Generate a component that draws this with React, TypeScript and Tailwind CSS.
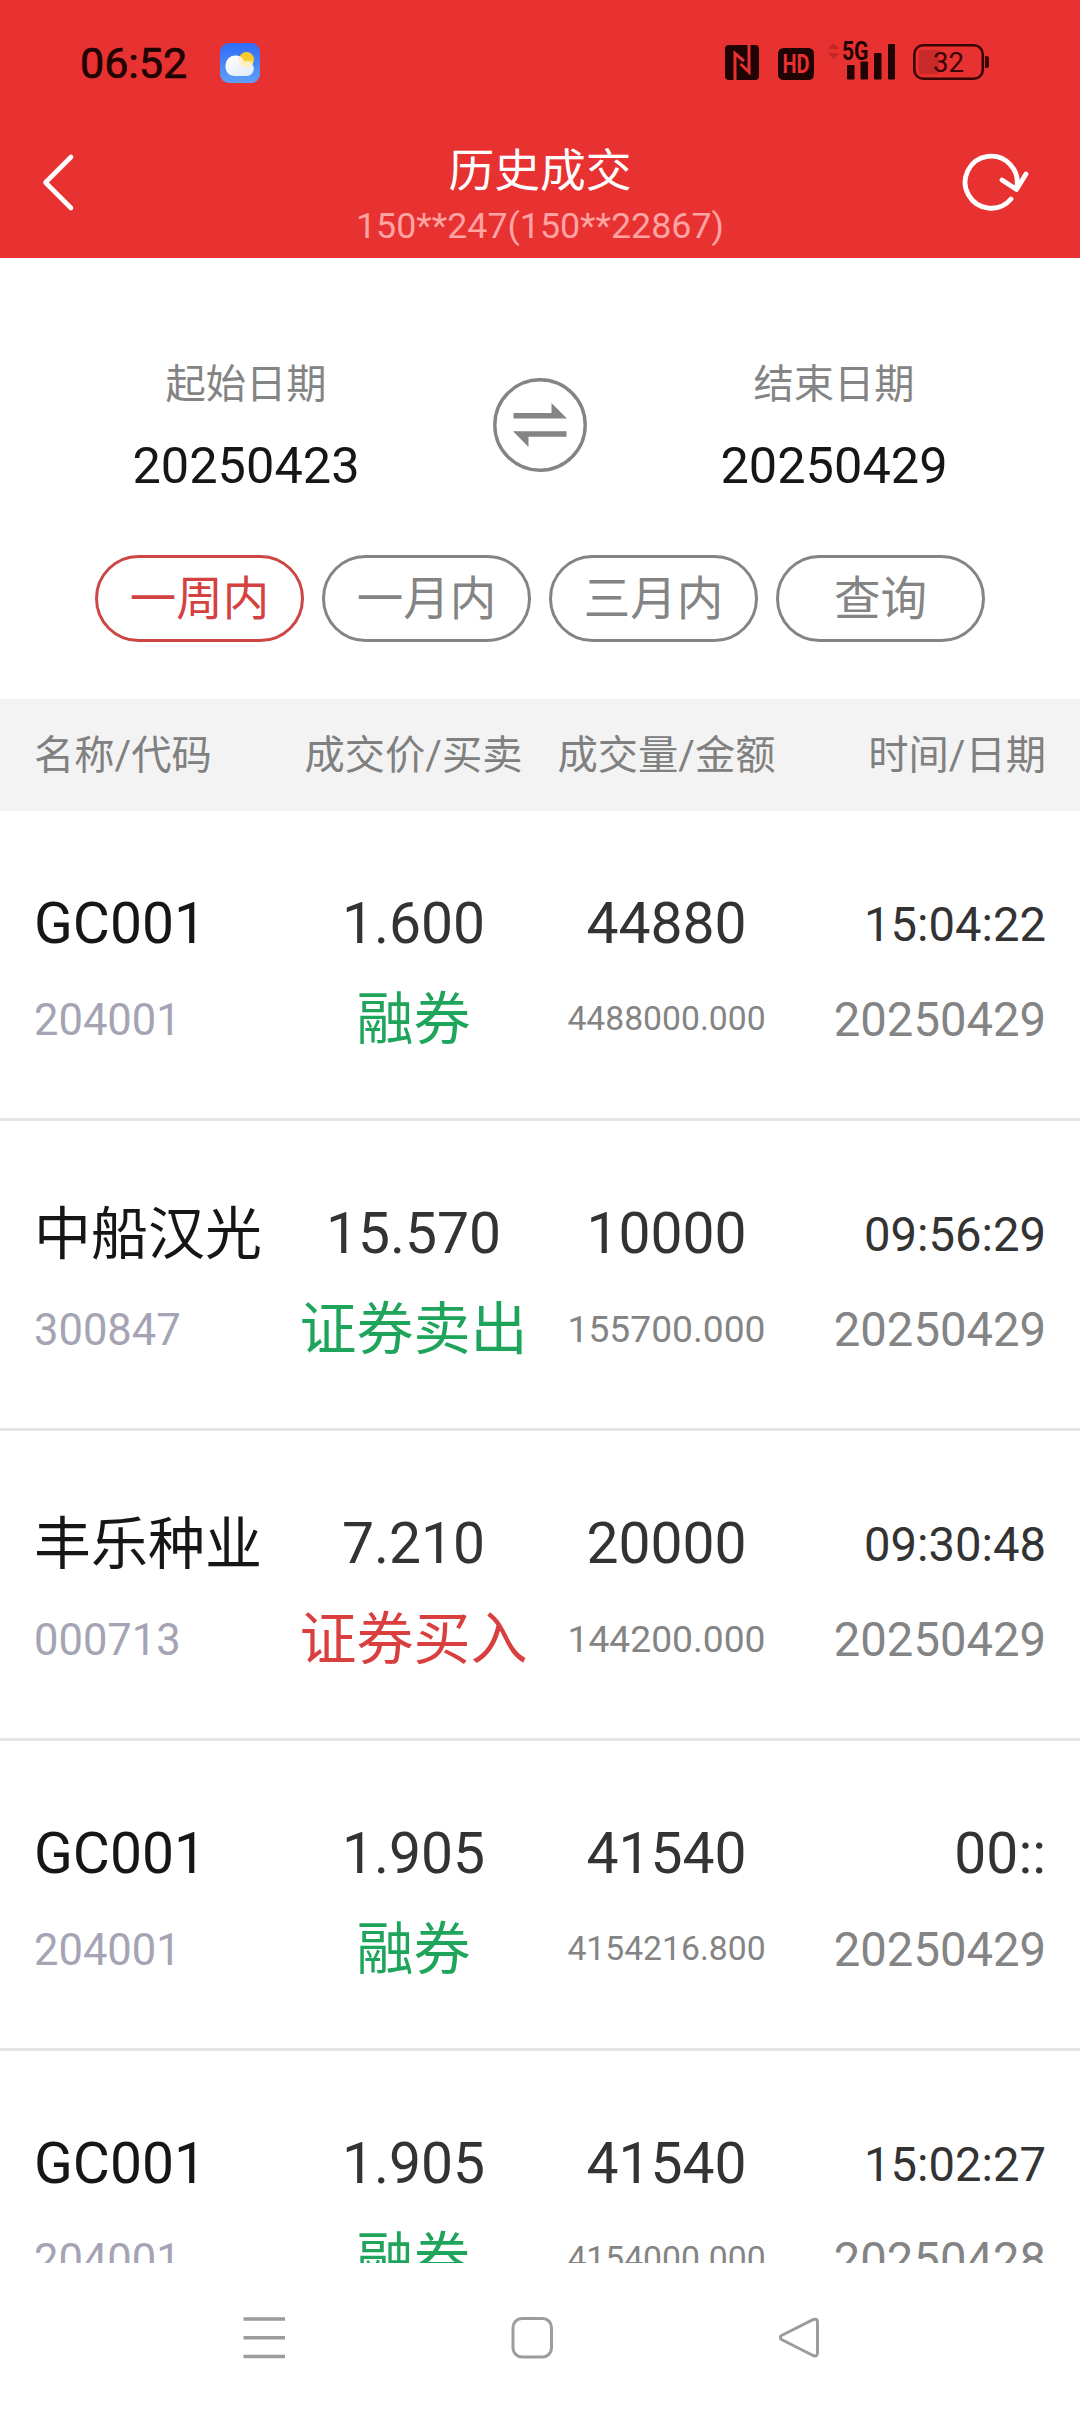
import React, { useState } from "react";

type Deal = {
  name: string;
  code: string;
  price: string;
  side: string;
  volume: string;
  amount: string;
  time: string;
  date: string;
};

const deals: Deal[] = [
  { name: "GC001", code: "204001", price: "1.600", side: "融券", volume: "44880", amount: "4488000.000", time: "15:04:22", date: "20250429" },
  { name: "中船汉光", code: "300847", price: "15.570", side: "证券卖出", volume: "10000", amount: "155700.000", time: "09:56:29", date: "20250429" },
  { name: "丰乐种业", code: "000713", price: "7.210", side: "证券买入", volume: "20000", amount: "144200.000", time: "09:30:48", date: "20250429" },
  { name: "GC001", code: "204001", price: "1.905", side: "融券", volume: "41540", amount: "4154216.800", time: "00::", date: "20250429" },
  { name: "GC001", code: "204001", price: "1.905", side: "融券", volume: "41540", amount: "4154000.000", time: "15:02:27", date: "20250428" },
];

const ranges = ["一周内", "一月内", "三月内", "查询"];

function StatusBar() {
  return (
    <div className="flex h-[124px] items-start justify-between pt-[36px] pr-[91px] pl-[80px] text-[#200303]">
      <div className="flex items-center">
        <span className="w-[140px] text-[43px] leading-[54px] [-webkit-text-stroke:0.7px_#200303]">06:52</span>
        {/* 天気アイコン */}
        <svg className="h-[40px] w-[40px]" viewBox="0 0 40 40">
          <defs>
            <linearGradient id="sky" x1="0" y1="0" x2="0" y2="1">
              <stop offset="0" stopColor="#2f6cf6" />
              <stop offset="1" stopColor="#5f9ff8" />
            </linearGradient>
            <linearGradient id="cloud" x1="0" y1="0" x2="1" y2="1">
              <stop offset="0" stopColor="#ffffff" />
              <stop offset="1" stopColor="#dfeafc" />
            </linearGradient>
          </defs>
          <rect width="40" height="40" rx="9" fill="url(#sky)" />
          <circle cx="26.5" cy="16.5" r="7.5" fill="#fbcb2b" />
          <path d="M15 33C9 33 5.500 29 5.500 23.500C5.500 17 9.500 12.500 15.500 12.500c4.500 0 7.500 2.500 8.800 6.300 4.500-1.500 9.500 1.600 9.500 6.700 0 4.200-3.200 7.500-7.300 7.500z" fill="url(#cloud)" />
          <path d="M19 15a7.500 7.500 0 0 0 14.500 4c-1.500-1-5-2-9.200-.2-1-2-2.800-3.600-5.300-3.800z" fill="#ffeeb0" opacity=".75" />
        </svg>
      </div>

      <div className="flex items-start pt-[5px]">
        {/* NFC */}
        <svg className="mt-[4px] h-[35px] w-[34px]" viewBox="0 0 34 35">
          <rect width="34" height="35" rx="4" fill="currentColor" />
          <path d="M10 35V8.500l9 7.500M24 0v27l-8.500-8" fill="none" stroke="#e83131" strokeWidth="3" />
        </svg>
        <svg className="mt-[7px] ml-[19px] h-[32px] w-[36px]" viewBox="0 0 36 32">
          <rect width="36" height="32" rx="5.500" fill="currentColor" />
          <text x="4.500" y="25" fontSize="25.500" fontWeight="700" textLength="27" lengthAdjust="spacingAndGlyphs" fill="#e83131">HD</text>
        </svg>
        {/* 5G + 信号強度 */}
        <svg className="ml-[13px] h-[40px] w-[69px] overflow-visible" viewBox="0 0 69 40">
          <path d="M1 8l5.500-6 5.500 6zM1 12l5.500 6 5.500-6z" fill="#c52525" />
          <text x="15" y="19" fontSize="25.500" fontWeight="700" textLength="26.500" lengthAdjust="spacingAndGlyphs" fill="currentColor">5G</text>
          <rect x="20" y="24" width="7.500" height="14.500" rx="1" fill="currentColor" />
          <rect x="33.500" y="20.500" width="7.500" height="18" rx="1" fill="currentColor" />
          <rect x="47" y="12" width="7.500" height="26.500" rx="1" fill="currentColor" />
          <rect x="61" y="3" width="7" height="35.500" rx="1" fill="currentColor" />
        </svg>
        {/* バッテリー */}
        <svg className="mt-[3px] ml-[17px] h-[36px] w-[76px]" viewBox="0 0 76 36">
          <path d="M9 6h17v24H9a3.500 3.500 0 0 1-3.500-3.500v-17A3.500 3.500 0 0 1 9 6z" fill="#c82a2a" />
          <rect x="1.300" y="1.300" width="68.500" height="33.400" rx="9" fill="none" stroke="#3a0505" strokeWidth="2.600" />
          <path d="M72 12h1.500a2.500 2.500 0 0 1 2.500 2.500v7a2.500 2.500 0 0 1-2.500 2.500H72z" fill="#3a0505" />
          <text x="20" y="27.500" fontSize="27" textLength="31" lengthAdjust="spacingAndGlyphs" fill="#3a0505">32</text>
        </svg>
      </div>
    </div>
  );
}

function Header() {
  return (
    <header className="h-[258px] shrink-0 bg-[#e83131]">
      <StatusBar />
      <div className="flex h-[134px] items-start justify-between">
        <button type="button" className="h-[117px] w-[120px]">
          <svg className="h-[117px] w-[120px]" viewBox="0 0 120 117" fill="none" stroke="#fff" strokeWidth="4.600" strokeLinecap="round" strokeLinejoin="round">
            <path d="M71 33L45.500 58.500 71 84" />
          </svg>
        </button>
        <div className="pt-[18px] text-center">
          <h1 className="text-[45.800px] leading-[60px] text-white">历史成交</h1>
          <p className="mt-[6px] text-[35.800px] leading-[36px] text-[#ffa3a3]">150**247(150**22867)</p>
        </div>
        <button type="button" className="h-[117px] w-[120px]">
          <svg className="h-[117px] w-[120px]" viewBox="0 0 120 117" fill="none" stroke="#fff" strokeWidth="4.800" strokeLinecap="round" strokeLinejoin="round">
            <path d="M51 75A26 26 0 1 1 56.500 64" />
            <path d="M42 56L56.500 65.500l9.500-15.500" />
          </svg>
        </button>
      </div>
    </header>
  );
}

function DateField({ label, value }: { label: string; value: string }) {
  return (
    <div className="flex flex-col items-center">
      <span className="text-[40.300px] leading-[50px] text-[#848484]">{label}</span>
      <span className="mt-[26px] text-[50.500px] leading-[60px] text-[#161616]">{value}</span>
    </div>
  );
}

function Filters() {
  const [active, setActive] = useState(0);

  return (
    <section className="h-[441px] shrink-0 pt-[102px]">
      <div className="grid grid-cols-3 px-[99px]">
        <DateField label="起始日期" value="20250423" />
        <svg className="mx-auto mt-[18px] h-[94px] w-[94px]" viewBox="0 0 94 94">
          <circle cx="47" cy="47" r="45.200" fill="none" stroke="#848484" strokeWidth="3.400" />
          <path d="M20.500 35h38V25l15.500 15.600H20.500zM73.500 58.800h-38V69L20 53.200h53.500z" fill="#848484" />
        </svg>
        <DateField label="结束日期" value="20250429" />
      </div>
      <div className="mt-[59px] grid grid-cols-4 gap-[18px] px-[95px]">
        {ranges.map((label, i) => (
          <button
            key={label}
            type="button"
            onClick={() => setActive(i)}
            className={`h-[87px] rounded-full border-[3px] pt-px text-[46.500px] leading-[80px] ${
              active === i ? "border-[#cc4646] text-[#d34141]" : "border-[#848484] text-[#848484]"
            }`}
          >
            {label}
          </button>
        ))}
      </div>
    </section>
  );
}

function DealRow({ deal }: { deal: Deal }) {
  const isBuy = deal.side === "证券买入";
  const isLatin = /^[A-Z0-9]+$/.test(deal.name);

  return (
    <li className="grid h-[310px] shrink-0 grid-cols-4 grid-rows-[80px_80px] gap-y-[15px] border-b-[3px] border-[#e6e6e6] px-[34px] pt-[73px] text-[57px] leading-[80px] whitespace-nowrap">
      <span className={`text-[#161616] ${isLatin ? "" : "pt-px"}`}>{deal.name}</span>
      <span className="text-center text-[#333333]">{deal.price}</span>
      <span className="text-center text-[#333333]">{deal.volume}</span>
      <span className={`text-right text-[#333333] ${deal.time.length > 4 ? "pt-px text-[47.200px]" : "text-[57px]"}`}>{deal.time}</span>
      <span className="pt-0.5 text-[43.500px] text-[#a4a4b4]">{deal.code}</span>
      <span className={`flex justify-center pt-px ${isBuy ? "text-[#d93f3f]" : "text-[#1fa55b]"}`}>{deal.side}</span>
      <span className={`text-center text-[#848484] ${deal.amount.length > 10 ? "text-[33.700px]" : "text-[37.200px]"}`}>{deal.amount}</span>
      <span className="pt-px text-right text-[47.200px] text-[#848484]">{deal.date}</span>
    </li>
  );
}

function SystemNav() {
  return (
    <nav className="flex h-[149px] shrink-0 items-start gap-[226px] bg-white pt-[54px] pl-[243px] text-[#9c9c9c]">
      <svg className="h-[42px] w-[42px]" viewBox="0 0 42 42" stroke="currentColor" strokeWidth="3.500">
        <path d="M0.500 2h41.500M0.500 20.800h41.500M0.500 39.500h41.500" />
      </svg>
      <svg className="h-[42px] w-[42px]" viewBox="0 0 42 42" fill="none" stroke="currentColor" strokeWidth="3">
        <rect x="2" y="1.500" width="38.500" height="38.500" rx="9" />
      </svg>
      <svg className="h-[42px] w-[42px]" viewBox="0 0 42 42" fill="none" stroke="currentColor" strokeWidth="3" strokeLinejoin="round">
        <path d="M2.500 18.500L34 2.600Q38.500 1 38.500 5V36Q38.500 40 34 38.500L2.500 22.500Q0 20.500 2.500 18.500z" />
      </svg>
    </nav>
  );
}

export default function App() {
  return (
    <div className="flex h-[2412px] w-[1080px] flex-col overflow-hidden bg-white font-['Roboto','Noto_Sans_CJK_SC',sans-serif]">
      <Header />
      <Filters />
      <div className="grid h-[112px] shrink-0 grid-cols-4 bg-[#f3f3f3] px-[34px] text-[40.300px] leading-[114px] whitespace-nowrap text-[#808080]">
        <span>名称/代码</span>
        <span className="text-center">成交价/买卖</span>
        <span className="text-center">成交量/金额</span>
        <span className="text-right">时间/日期</span>
      </div>
      <ul className="flex min-h-0 flex-1 flex-col overflow-hidden">
        {deals.map((deal, i) => (
          <DealRow key={i} deal={deal} />
        ))}
      </ul>
      <SystemNav />
    </div>
  );
}
